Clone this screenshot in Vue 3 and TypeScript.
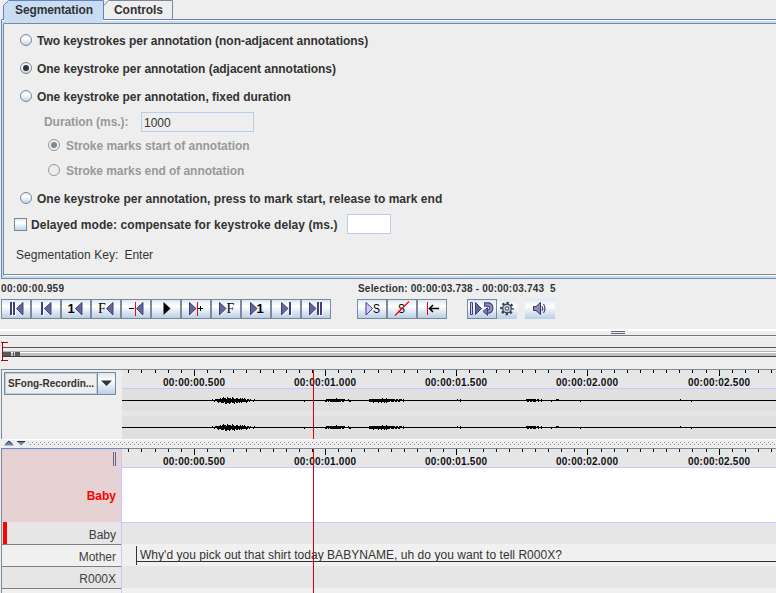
<script setup lang="ts">
interface Option { label: string; cls: string; checked?: boolean }

const firstOptions: Option[] = [
  { label: 'Two keystrokes per annotation (non-adjacent annotations)', cls: 'tight' },
  { label: 'One keystroke per annotation (adjacent annotations)', cls: 'tight', checked: true },
  { label: 'One keystroke per annotation, fixed duration', cls: 'tight' },
]

const left = (x: number) => `${x},9.5 ${x + 6.5},3.5 ${x + 6.5},16`
const right = (x: number) => `${x + 6.5},9.5 ${x},3.5 ${x},16`

interface Transport { tri: string; bars?: number[]; text?: string; tx?: number; serif?: boolean; red?: number; lines?: string; play?: boolean }
const transport: Transport[] = [
  { tri: left(15.5), bars: [9, 12] },
  { tri: left(13.5), bars: [10] },
  { tri: left(14.5), text: '1', tx: 6.5 },
  { tri: left(15.5), text: 'F', tx: 7, serif: true },
  { tri: left(15.5), red: 14, lines: 'M8 9.5H13' },
  { tri: '19.5,9.5 12.5,3 12.5,16', play: true },
  { tri: right(8.5), red: 16, lines: 'M17 9.5H22M19.5 7V12' },
  { tri: right(8.5), text: 'F', tx: 15.5, serif: true },
  { tri: right(9.5), text: '1', tx: 15.5 },
  { tri: right(10.5), bars: [18] },
  { tri: right(8.5), bars: [16, 19] },
]

const origin = 122
const majors = [0, 1, 2, 3, 4].map((i) => ({
  x: Math.floor(194.3 + i * 131.2) - origin,
  label: ['00:00:00.500', '00:00:01.000', '00:00:01.500', '00:00:02.000', '00:00:02.500'][i],
}))
const minors: number[] = []
for (let i = -5; i < 45; i++) {
  if (i % 10 !== 0) minors.push(Math.floor(194.4 + i * 13.12) - origin)
}

// per-pixel extents above and below the zero line, from a start x
const runs: { start: number; up: string; down: string }[] = [
  { start: 212, up: '10011111212322132221321122112121210110100010', down: '00100121122213322321223122121211112101000100' },
  { start: 325, up: '011111111112111111110001', down: '110101111111111101100000' },
  { start: 369, up: '111111111111121112111111110110111010', down: '111121111211211212111011101101100010' },
  { start: 526, up: '1111111111011000', down: '0110110111001001' },
]
const wave = (y: number): string => {
  let d = `M0 ${y}H654V${y + 1}H0Z`
  for (const run of runs) {
    for (let i = 0; i < run.up.length; i++) {
      const up = Number(run.up[i])
      const down = Number(run.down[i])
      d += `M${run.start - origin + i} ${y - up}h1v${up + down + 1}h-1Z`
    }
  }
  for (const x of [304, 349, 350, 460, 551, 580, 691]) d += `M${x - origin} ${y}h1v2h-1Z`
  for (const x of [457, 460, 541, 556, 557, 558, 680]) d += `M${x - origin} ${y - 1}h1v2h-1Z`
  return d
}
</script>

<template>
  <main class="app">
    <section class="tabs">
      <svg class="tabbar" width="776" height="24">
        <path d="M3.5 20V5L8.5 .5H103V24H3.5Z" fill="#c8ddf2" />
        <path d="M1 20h775v1H1z" fill="#fff" />
        <path d="M2 21h774v2H2z" fill="#c8ddf2" />
        <path d="M4 18H103V22H4z" fill="#c8ddf2" />
        <path d="M3.5 19.5V5.5L8.5 .5H103.5V19.5H776M1.5 24V19.5H4" fill="none" stroke="#6382bf" />
        <path d="M104 5.5L108.5 .5H172.5V19" fill="none" stroke="#7a8a99" />
        <path d="M3.5 24V23.5H776" fill="none" stroke="#7a8a99" />
        <text x="15" y="14" textLength="78">Segmentation</text>
        <text x="114" y="14" textLength="49">Controls</text>
      </svg>
      <div class="pane">
        <div class="inner">
          <div v-for="o in firstOptions" :key="o.label" class="row opt">
            <span class="radio" :class="{ on: o.checked }"></span>
            <span :class="o.cls">{{ o.label }}</span>
          </div>
          <div class="row duration off"><span class="caption">Duration (ms.):</span><span class="field">1000</span></div>
          <div class="row sub start off"><span class="radio on"></span><span class="tight">Stroke marks start of annotation</span></div>
          <div class="row sub end off"><span class="radio"></span><span class="tighter">Stroke marks end of annotation</span></div>
          <div class="row opt press"><span class="radio"></span><span class="wide">One keystroke per annotation, press to mark start, release to mark end</span></div>
          <div class="row delayed"><span class="check"></span><span class="wider">Delayed mode: compensate for keystroke delay (ms.)</span><span class="field blank"></span></div>
          <div class="row key"><span class="wider">Segmentation Key:</span><span>Enter</span></div>
        </div>
      </div>
    </section>

    <svg class="times" width="776" height="20">
      <text x="1" y="13" textLength="63">00:00:00.959</text>
      <text x="358" y="13" textLength="186">Selection: 00:00:03.738 - 00:00:03.743</text>
      <text x="550" y="13">5</text>
    </svg>

    <div class="toolbar">
      <div class="group">
        <span v-for="(b, i) in transport" :key="i" class="btn">
          <svg width="30" height="20">
            <polygon v-if="!b.play" :points="b.tri" transform="translate(1 1)" fill="#fff" />
            <polygon :points="b.tri" :class="b.play ? 'play' : 'tri'" />
            <g v-for="x in b.bars" :key="x"><rect :x="x + 1" y="4" width="2" height="13" fill="#fff" /><rect :x="x" y="3" width="2" height="13" fill="#3f3f80" /></g>
            <text v-if="b.text" :x="b.tx" y="14" :class="b.serif ? 'serif' : 'num'">{{ b.text }}</text>
            <path v-if="b.lines" :d="b.lines" stroke="#000" fill="none" />
            <rect v-if="b.red" :x="b.red" y="3" width="1" height="14" fill="#f00" />
          </svg>
        </span>
      </div>
      <div class="group selection">
        <span class="btn"><svg width="30" height="20"><polygon points="15.5,9.5 9,3.5 9,16" fill="#ccccff" stroke="#404080" /><text class="s" x="16" y="14" textLength="7" lengthAdjust="spacingAndGlyphs">S</text></svg></span>
        <span class="btn"><svg width="30" height="20"><text class="s" x="11" y="14" textLength="7" lengthAdjust="spacingAndGlyphs">S</text><path d="M8 16.5L22 2.5" stroke="#f00" stroke-width="1.3" /></svg></span>
        <span class="btn"><svg width="30" height="20"><path d="M10.5 3v13" stroke="#f00" /><path d="M12.5 9.5H22M16 6L12.500 9.500L16 13" fill="none" stroke="#000" stroke-width="1.6" /></svg></span>
      </div>
      <div class="group loop">
        <span class="btn"><svg width="30" height="20">
          <path d="M3.5 3.5h2v12h-2z" fill="#ccccff" stroke="#404080" />
          <polygon points="14.5,9.5 8.5,3.5 8.5,15.5" class="tri" />
          <path d="M17 5.500H21.500A3.600 3.600 0 0 1 21.500 12.500H20" fill="none" stroke="#404080" stroke-width="4.400" />
          <path d="M18 5.500H21.500A3.600 3.600 0 0 1 21.500 12.500H19" fill="none" stroke="#9292bd" stroke-width="2.200" />
          <path d="M20.5 8.7V16.3L16 12.4Z" fill="#77a" stroke="#404080" />
        </svg></span>
        <span class="btn flat gear"><svg width="20" height="20">
          <circle cx="10" cy="9.5" r="5.7" fill="none" stroke="#333a50" stroke-width="2.2" stroke-dasharray="2.24 2.237" stroke-dashoffset="1.12" />
          <circle cx="10" cy="9.5" r="4.3" fill="#c7cddd" stroke="#333a50" stroke-width="1.2" />
          <circle cx="10" cy="9.5" r="1.7" fill="#fff" stroke="#333a50" />
        </svg></span>
      </div>
      <div class="group volume"><span class="btn flat"><svg width="30" height="20">
        <path d="M8.5 7.5H11L15.5 3.5V15.5L11 11.5H8.5Z" fill="#8c8cb5" stroke="#34345f" />
        <path d="M17 7Q18.6 9.5 17 12M18.5 5Q21.4 9.5 18.5 14" fill="none" stroke="#50508c" stroke-width="1.2" />
      </svg></span></div>
    </div>

    <svg class="overview" width="776" height="50" shape-rendering="crispEdges">
      <path d="M0 10h776v2H0z" fill="#fff" />
      <path d="M611 12h14v1h-14zM611 14h14v1h-14z" fill="#636388" />
      <path d="M0 16h776v1H0z" fill="#777" />
      <path d="M0 17h776v1H0z" fill="#f7f7f7" />
      <path d="M2 28h774v1H2z" fill="#555" />
      <path d="M2 32h774v1H2z" fill="#b4b4b4" />
      <path d="M2 33h774v1H2z" fill="#fff" />
      <path d="M2 34h774v3H2z" fill="#c0c0c0" />
      <path d="M2 37h774v1H2z" fill="#404040" />
      <path d="M3 33h8v4h-8zM13 33h1v4h-1zM15 33h5v4h-5z" fill="#5a5a5a" />
      <path d="M8 23.5H1M2.5 23V41M1 41.5H8" fill="none" stroke="#b40000" />
    </svg>

    <section class="signal">
      <div class="picker">
        <div class="combo"><span>SFong-Recordin...</span><i><svg width="17" height="20"><path d="M3 7.5H14L8.5 13Z" fill="#333" /></svg></i></div>
      </div>
      <div class="plot">
        <svg width="654" height="69" shape-rendering="crispEdges">
          <rect width="654" height="69" fill="#e6e6e6" />
          <rect y="19" width="654" height="22" fill="#e0e0e0" />
          <rect y="46" width="654" height="23" fill="#e0e0e0" />
          <rect y="18" width="654" height="1" fill="#c8c8ff" />
          <rect v-for="x in minors" :key="x" :x="x" y="0" width="1" height="3" />
          <g v-for="m in majors" :key="m.x"><rect :x="m.x" y="0" width="1" height="6" /><text :x="m.x - 31" y="16" textLength="62">{{ m.label }}</text></g>
          <path :d="wave(30)" />
          <path :d="wave(57)" />
          <rect x="191" width="1" height="69" fill="#e00000" />
        </svg>
      </div>
    </section>

    <div class="splitter"><svg width="28" height="9"><path d="M0 1h28v8H0z" fill="#eee" /><path d="M4 6.5L9 2L14 6.5Z" fill="#6382bf" /><path d="M5.5 5L9 2L12.5 5" stroke="#333" fill="none" /><path d="M16.5 2H26L21 6.5Z" fill="#6382bf" /><path d="M17 2.5H25" stroke="#333" /></svg></div>

    <section class="timeline">
      <div class="names">
        <div class="active"><svg width="4" height="15"><path d="M.5 1v14M2.5 1v14" stroke="#636390" /></svg><strong>Baby</strong></div>
        <div class="tier marked"><span>Baby</span></div>
        <div class="tier alt"><span>Mother</span></div>
        <div class="tier"><span>R000X</span></div>
        <div class="tier alt last"></div>
      </div>
      <div class="plot">
        <svg width="654" height="144" shape-rendering="crispEdges">
          <rect width="654" height="144" fill="#e6e6e6" />
          <rect y="18" width="654" height="1" fill="#c8c8ff" />
          <rect y="19" width="654" height="54" fill="#fff" />
          <rect y="73" width="654" height="1" fill="#c8c8ff" />
          <rect y="95" width="654" height="22" fill="#f0f0f0" />
          <rect y="139" width="654" height="5" fill="#f0f0f0" />
          <rect v-for="x in minors" :key="x" :x="x" y="0" width="1" height="3" />
          <g v-for="m in majors" :key="m.x"><rect :x="m.x" y="0" width="1" height="6" /><text :x="m.x - 31" y="16" textLength="62">{{ m.label }}</text></g>
          <path d="M14 97h1v19h-1zM14 112h640v1H14z" fill="#333" />
          <text class="speech" x="18" y="110" textLength="422">Why'd you pick out that shirt today BABYNAME, uh do you want to tell R000X?</text>
          <rect x="191" width="1" height="144" fill="#e00000" />
        </svg>
      </div>
    </section>
  </main>
</template>

<style>
body { margin: 0; overflow: hidden; background: #eee; }
</style>

<style scoped>
.app { width: 776px; height: 593px; overflow: hidden; background: #eee; color: #333; font: bold 12px/14px "Liberation Sans", Arial, sans-serif; }
svg { display: block; flex: none; }
.tabs { height: 279px; }
.tabbar text { fill: #333; }
.pane { box-sizing: border-box; height: 255px; margin-left: 1px; border-left: 1px solid #6382bf; border-bottom: 1px solid #7a8a99; background: #c8ddf2; padding: 0 0 2px 1px; }
.inner { box-sizing: border-box; height: 252px; border-left: 1px solid #7a8a99; border-bottom: 1px solid #fff; box-shadow: inset 0 -1px #7a8a99; background: #eee; padding-top: 3px; }
.row { display: flex; align-items: center; box-sizing: border-box; white-space: nowrap; }
.opt { height: 28px; padding-left: 16px; gap: 5px; }
.tight { letter-spacing: -.035px; }
.tighter { letter-spacing: -.06px; }
.wide { letter-spacing: .025px; }
.wider { letter-spacing: .06px; }
.radio { box-sizing: border-box; width: 12px; height: 12px; flex: none; border: 1px solid #7a8a99; border-radius: 50%; background: linear-gradient(#dfeaf4, #fff 35%, #bed3e6); position: relative; top: -1px; }
.radio.on { display: flex; align-items: center; justify-content: center; }
.radio.on::after { content: ""; width: 6px; height: 6px; border-radius: 50%; background: #333; }
.off { color: #999; }
.off .radio { border-color: #999; background: #eee; }
.off .radio.on::after { background: #7a8a99; }
.duration { height: 23px; padding: 0 0 2px 40px; }
.caption { width: 97px; letter-spacing: -.06px; }
.field { box-sizing: border-box; width: 113px; height: 20px; border: 1px solid #b8cfe5; padding: 3px 2px; font-weight: normal; color: #333; }
.blank { width: 44px; background: #fff; margin-left: 10px; position: relative; top: -1px; }
.sub { padding-left: 44px; gap: 6px; }
.start { height: 24px; }
.end { height: 26px; }
.press { height: 30px; }
.delayed { height: 22px; padding-left: 10px; }
.check { box-sizing: border-box; width: 13px; height: 13px; border: 1px solid #7a8a99; background: linear-gradient(#dfeaf4, #fff 35%, #bed3e6); margin: 0 4px 2px 0; }
.key { height: 38px; padding-left: 12px; gap: 6px; font-weight: normal; }
.times { font-size: 10px; fill: #333; }
.toolbar { display: flex; height: 20px; padding-left: 1px; }
.group { display: flex; }
.selection { margin-left: 26px; }
.loop { margin-left: 20px; }
.volume { margin-left: 8px; }
.btn { box-sizing: border-box; width: 30px; height: 20px; border: 1px solid #7a8a99; background: linear-gradient(#dde8f3, #fff 35%, #b8cfe5); }
.btn svg { margin: -1px; }
.btn.flat { border-color: transparent; background-origin: border-box; }
.gear { width: 20px; }
.tri { fill: #666699; stroke: #404078; }
.play { fill: #000; }
.num { font: bold 13px "Liberation Sans", sans-serif; fill: #000; }
.serif { font: 14px "Liberation Serif", serif; fill: #000; }
.s { font: 13px "Liberation Sans", sans-serif; fill: #000; }
.signal, .timeline { display: flex; box-sizing: border-box; margin-left: 1px; border-top: 1px solid #7a8a99; border-left: 1px solid #7a8a99; }
.signal { height: 70px; }
.picker { width: 120px; box-sizing: border-box; padding: 2px; }
.combo { box-sizing: border-box; display: flex; width: 112px; height: 23px; border: 1px solid #7a8a99; }
.combo span { box-sizing: border-box; width: 92px; flex: none; border: 1px solid #b8cfe5; padding: 2px 0 0 2px; font-size: 10px; line-height: 16px; white-space: nowrap; }
.combo i { width: 17px; border-left: 1px solid #7a8a99; background: linear-gradient(#dde8f3, #fff 35%, #b8cfe5); }
.plot { width: 654px; }
.plot text { font: bold 10px "Liberation Sans", sans-serif; fill: #111; }
.plot .speech { font: 12px "Liberation Sans", sans-serif; fill: #333; }
.splitter { height: 9px; box-shadow: inset 0 1px #fff; background: conic-gradient(from 0deg at 1px 1px, transparent 270deg, #8291a2 0) 0 3px / 4px 4px repeat-x, conic-gradient(from 0deg at 1px 1px, transparent 270deg, #8291a2 0) 2px 5px / 4px 4px repeat-x; }
.timeline { height: 145px; }
.names { width: 120px; box-sizing: border-box; border-right: 1px solid #c8c8ff; font-weight: normal; color: #404040; }
.active { box-sizing: border-box; height: 73px; border-top: 1px solid #c8c8ff; background: #e6d2d2; display: flex; flex-direction: column; align-items: flex-end; padding: 1px 4px 0 0; color: #f00; }
.active strong { margin: 23px 1px 0 0; }
.tier { box-sizing: border-box; height: 22px; border-bottom: 1px solid #808080; padding: 5px 5px 0 0; text-align: right; background: #e6e6e6; }
.tier.alt { background: #f0f0f0; }
.tier.marked { height: 23px; padding-top: 6px; position: relative; }
.marked::before { content: ""; position: absolute; left: 1px; top: 0; width: 4px; height: 22px; background: #f00; }
.tier.last { height: 5px; padding: 0; border: 0; }
</style>
